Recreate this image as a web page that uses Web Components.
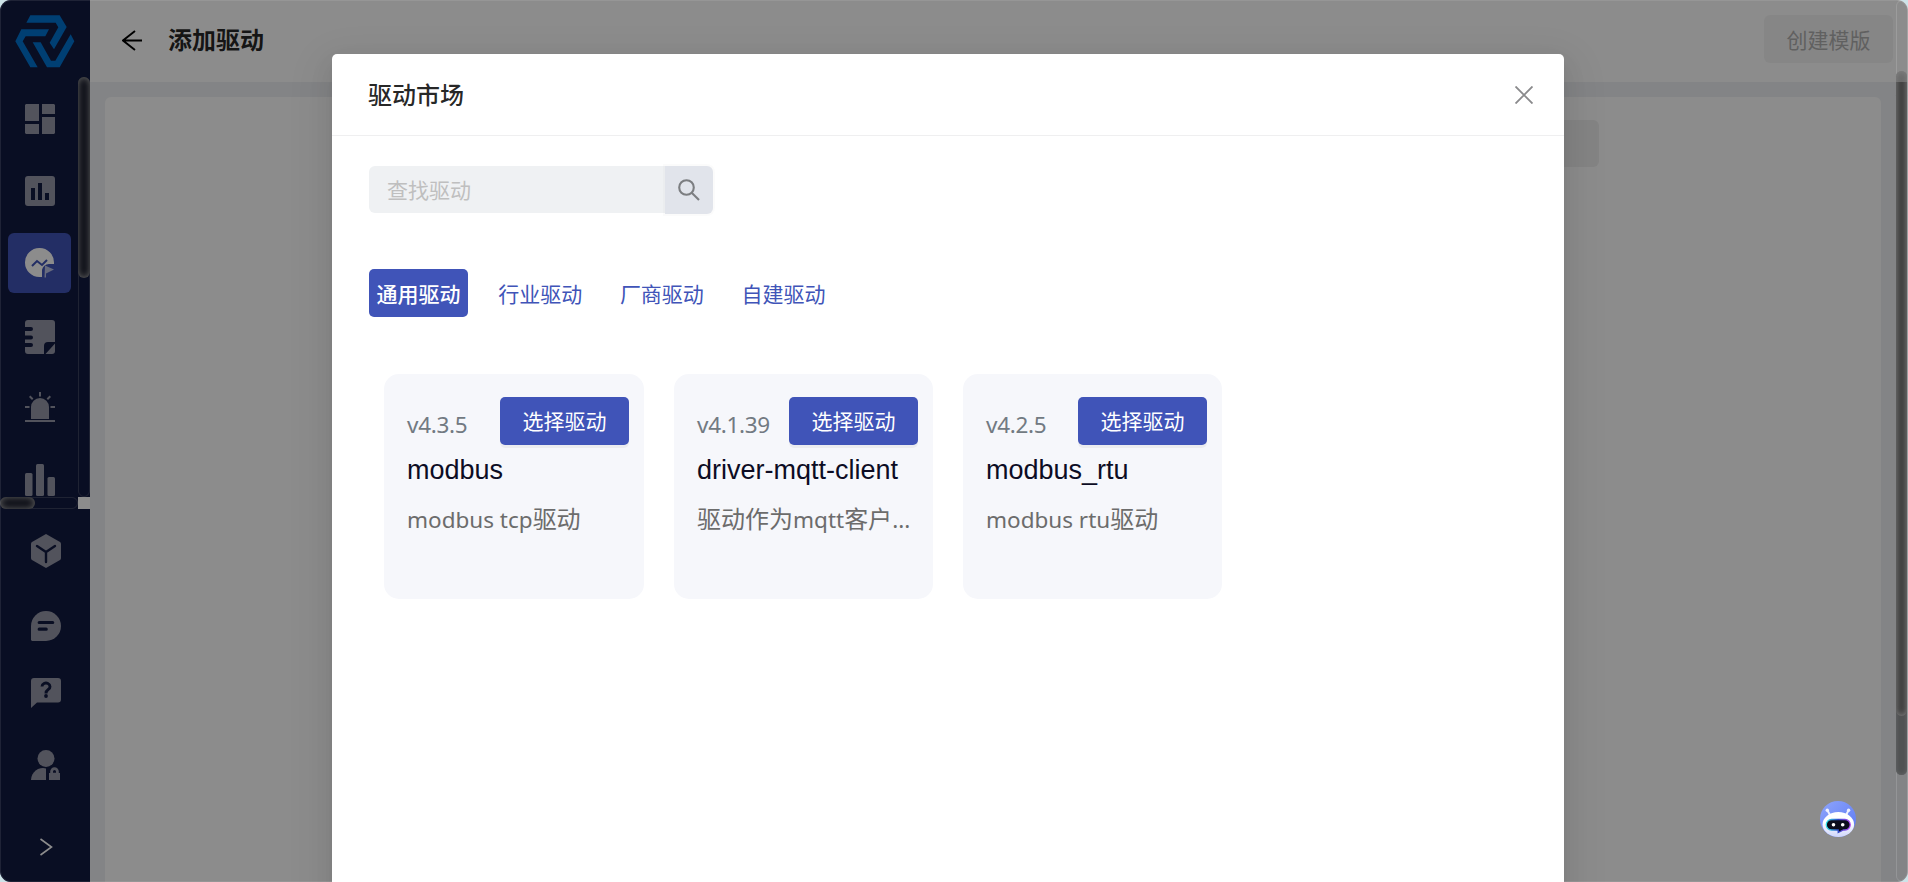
<!DOCTYPE html>
<html lang="zh-CN">
<head>
<meta charset="UTF-8">
<title>添加驱动</title>
<style>
    html, body {
        margin: 0;
        height: 100%;
        overflow: hidden;
        background: #cde3e8;
        font-family: "Noto Sans", "Noto Sans CJK SC", sans-serif;
    }
</style>
</head>
<body>
<app-window>
    <side-bar slot="side"></side-bar>
    <page-header slot="page" heading="添加驱动" action="创建模版"></page-header>
    <page-panel slot="page"></page-panel>
    <market-modal slot="modal" heading="驱动市场">
        <search-box placeholder="查找驱动"></search-box>
        <driver-tabs items="通用驱动,行业驱动,厂商驱动,自建驱动"></driver-tabs>
        <card-grid>
            <driver-card version="v4.3.5" name="modbus" desc="modbus tcp驱动"></driver-card>
            <driver-card version="v4.1.39" name="driver-mqtt-client" desc="驱动作为mqtt客户..."></driver-card>
            <driver-card version="v4.2.5" name="modbus_rtu" desc="modbus rtu驱动"></driver-card>
        </card-grid>
    </market-modal>
    <chat-robot slot="float"></chat-robot>
</app-window>

<script>
class AppWindow extends HTMLElement {
    connectedCallback() {
        this.attachShadow({ mode: 'open' });
        this.shadowRoot.innerHTML = `
            <style>
                :host {
                    display: flex;
                    position: relative;
                    width: 100%;
                    height: 100vh;
                    border-radius: 11px;
                    overflow: hidden;
                    background: #eff1f4;
                }

                .page {
                    flex: 1;
                    display: flex;
                    flex-direction: column;
                    min-width: 0;
                }

                .mask {
                    position: absolute;
                    inset: 0;
                    background: rgba(0, 0, 0, 0.45);
                }

                .wrap {
                    position: absolute;
                    inset: 0;
                    display: flex;
                    padding: 54px 0 0 332px;
                }

                /* page scrollbar under the modal's own one */
                .track {
                    position: absolute;
                    top: 0;
                    right: 0;
                    width: 12px;
                    height: 100%;
                    border: 1px solid rgba(255, 255, 255, 0.14);
                    border-radius: 11px;
                    box-sizing: border-box;
                }

                .under, .thumb {
                    position: absolute;
                    right: 1px;
                    width: 11px;
                    border-radius: 6px;
                }

                .under {
                    top: 90px;
                    height: 685px;
                    background: #505253;
                    box-shadow: inset 0 0 4px #68696b;
                }

                .thumb {
                    top: 71px;
                    height: 645px;
                    background: linear-gradient(#6a6a6a 11px, #3e3e3e 11px);
                    box-shadow: inset 0 0 6px #858585;
                }

                .edge {
                    position: absolute;
                    inset: 0;
                    border: 1px solid rgba(255, 255, 255, 0.09);
                    border-radius: 11px;
                }
            </style>
            <slot name="side"></slot>
            <div class="page"><slot name="page"></slot></div>
            <div class="mask"></div>
            <div class="wrap"><slot name="modal"></slot></div>
            <div class="track"></div>
            <div class="under"></div>
            <div class="thumb"></div>
            <slot name="float"></slot>
            <div class="edge"></div>
        `;
    }
}

class SideBar extends HTMLElement {
    connectedCallback() {
        const menu = [
            '<svg width="30" height="30" viewBox="0 0 30 30"><path d="M1 0h13v17H0V1zM0 20h14v10H1l-1-1zM17 0h12l1 1v9H17zM17 13h13v16l-1 1H17z"/></svg>',
            '<svg width="30" height="30" viewBox="0 0 30 30"><path fill-rule="evenodd" d="M3 0h24a3 3 0 0 1 3 3v24a3 3 0 0 1-3 3H3a3 3 0 0 1-3-3V3a3 3 0 0 1 3-3zM6 12v12h4V12zM13 7v17h4V7zM20 17v7h4v-7z"/></svg>',
            '<svg width="30" height="30" viewBox="0 0 30 30"><path d="M14.500 0A14.400 14.400 0 0 0 0 14.500A14.400 14.400 0 0 0 14.500 29H17V22A7 7 0 0 1 24 16H29V14.500A14.400 14.400 0 0 0 14.500 0z"/><path d="M7 18l5-5 5 4 5-5" fill="none" stroke="#4054b8" stroke-width="2"/><path d="M20 17.500l9 4-8 4v4h-1.500z" opacity=".65"/></svg>',
            '<svg style="margin-top:4px" width="30" height="34" viewBox="0 0 30 34"><path d="M3 0h24a3 3 0 0 1 3 3v19h-7a4 4 0 0 0-4 4v8H3a3 3 0 0 1-3-3v-4h6a1.500 1.500 0 0 0 0-4H0v-3.500h6a1.500 1.500 0 0 0 0-4H0V11h6a1.500 1.500 0 0 0 0-4H0V3a3 3 0 0 1 3-3zM30 23.500V31a3 3 0 0 1-3 3h-6.500z"/></svg>',
            '<svg width="30" height="30" viewBox="0 0 30 30"><path d="M6 27V15a9 9 0 0 1 18 0v12zM0 28h30v2H0zM14 0h2v4.500h-2zM0 14h4.500v2H0zM25.500 14H30v2h-4.500zM4 5l1.400-1.400 3 3L7 8zM26 5l-1.400-1.400-3 3L23 8z"/></svg>',
            '<svg style="margin-top:2px" width="30" height="32" viewBox="0 0 30 32"><rect y="9" width="7.500" height="23" rx="1.500"/><rect x="11" width="8" height="32" rx="1.500"/><rect x="22.500" y="13" width="7.500" height="19" rx="1.500"/></svg>'
        ];
        this.attachShadow({ mode: 'open' });
        this.shadowRoot.innerHTML = `
            <style>
                :host {
                    display: flex;
                    flex-direction: column;
                    width: 90px;
                    height: 100%;
                    background: #121a40;
                    color: #9698a8;
                }

                svg {
                    display: block;
                    fill: currentColor;
                }

                .logo {
                    height: 53px;
                    padding: 15px 0 9px 15px;
                    color: #0073d2;
                }

                .scroller {
                    display: grid;
                    grid-template-columns: 78px 12px;
                    grid-template-rows: 420px 12px;
                    height: 432px;
                }

                .menu {
                    display: flex;
                    flex-direction: column;
                    gap: 12px;
                    padding: 12px 0 0 8px;
                    overflow: hidden;
                }

                .item {
                    flex: none;
                    width: 63px;
                    height: 60px;
                    display: flex;
                    align-items: center;
                    justify-content: center;
                    border-radius: 6px;
                }

                .item.active {
                    background: #4054b8;
                    color: #fff;
                }

                .bar {
                    border: 1px solid #3a405e;
                    border-radius: 7px;
                }

                .bar div {
                    margin: -1px;
                    border-radius: 7px;
                    background: #1a1d2c;
                    box-shadow: inset 0 0 7px #b5b5b5;
                }

                .bar.v div { height: 201px; }
                .bar.h div { height: 12px; width: 35px; }
                .corner { background: #fff; }

                .foot {
                    display: flex;
                    flex-direction: column;
                    align-items: flex-start;
                    padding: 25px 0 0 31px;
                }
            </style>
            <div class="logo">
                <svg width="60" height="53" viewBox="46 44 180 159">
                    <path d="M92 45H180L201 80 163 147 150 127 176 81 168 67H80zM65 87H148L137 108H78L69 123 114 201H92L47 123zM99 126H123L154 181H167L213 102 224 123 180 201H142z"/>
                </svg>
            </div>
            <div class="scroller">
                <div class="menu">
                    ${menu.map((icon, i) => `<div class="item ${i === 2 ? 'active' : ''}">${icon}</div>`).join('')}
                </div>
                <div class="bar v"><div></div></div>
                <div class="bar h"><div></div></div>
                <div class="corner"></div>
            </div>
            <div class="foot">
                <svg width="30" height="34" viewBox="0 0 30 34"><path d="M15 0l14 8q1 .5 1 2v14q0 1.500-1 2l-14 8-14-8q-1-.5-1-2V10q0-1.500 1-2z"/><path d="M6 12l9 6 9-6M15 18v10" fill="none" stroke="#121a40" stroke-width="2.400" stroke-linecap="round"/></svg>
                <svg style="margin-top:43px" width="30" height="30" viewBox="0 0 30 30"><path d="M15 0a15 15 0 1 1 0 30H1l-1-1V15A15 15 0 0 1 15 0z"/><path d="M8.200 11.500h13.500M8.200 18.200h7" stroke="#121a40" stroke-width="3.200" stroke-linecap="round"/></svg>
                <svg style="margin-top:37px" width="30" height="30" viewBox="0 0 30 30"><path d="M3 0h24a3 3 0 0 1 3 3v18.500a3 3 0 0 1-3 3H6L0 30V3a3 3 0 0 1 3-3z"/><path d="M11 8.500a4 3.500 0 1 1 6.200 3q-2.200 1.500-2.200 4" fill="none" stroke="#121a40" stroke-width="2.900"/><circle cx="15" cy="18" r="1.900" fill="#121a40"/></svg>
                <svg style="margin-top:42px" width="30" height="30" viewBox="0 0 30 30"><circle cx="15" cy="8.500" r="8.500"/><path d="M0 30A12 12 0 0 1 15 18.500V30z"/><path fill-rule="evenodd" d="M18 23h1.200v-1.500a4.300 4.300 0 0 1 8.600 0V23H29v7H18zM22 22.700h3v-1.200a1.500 1.500 0 0 0-3 0z"/></svg>
                <svg style="margin:58px 0 0 9px" width="13" height="18" viewBox="0 0 13 18"><path d="M.5 1L11.500 9 .5 17" fill="none" stroke="#fff" stroke-width="1.600"/></svg>
            </div>
        `;
    }
}

class PageHeader extends HTMLElement {
    connectedCallback() {
        this.attachShadow({ mode: 'open' });
        this.shadowRoot.innerHTML = `
            <style>
                :host {
                    display: flex;
                    align-items: center;
                    box-sizing: border-box;
                    height: 82px;
                    padding: 0 15px 4px 32px;
                    background: #fff;
                }

                svg { margin-top: 2px; }

                h1 {
                    flex: 1;
                    margin: 2px 0 0 25px;
                    font-size: 24px;
                    line-height: 36px;
                    font-weight: 600;
                    color: rgba(0, 0, 0, 0.85);
                }

                button {
                    width: 129px;
                    height: 48px;
                    padding: 0;
                    border: 0;
                    border-radius: 6px;
                    background: #f5f5f5;
                    color: #b0b0b0;
                    font: 21px "Noto Sans CJK SC", sans-serif;
                }
            </style>
            <svg width="21" height="21" viewBox="0 0 21 21" fill="none" stroke="#000" stroke-width="1.900"><path d="M20 10.500H1M13 1L1 10.500 13 20"/></svg>
            <h1>${this.getAttribute('heading')}</h1>
            <button disabled>${this.getAttribute('action')}</button>
        `;
    }
}

class PagePanel extends HTMLElement {
    connectedCallback() {
        this.attachShadow({ mode: 'open' });
        this.shadowRoot.innerHTML = `
            <style>
                :host {
                    flex: 1;
                    display: flex;
                    justify-content: flex-end;
                    margin: 15px 27px 0 15px;
                    padding: 23px 282px 0 0;
                    border-radius: 6px 6px 0 0;
                    background: #fff;
                }

                .action {
                    width: 130px;
                    height: 47px;
                    border-radius: 6px;
                    background: #f0f0f0;
                }
            </style>
            <div class="action"></div>
        `;
    }
}

class MarketModal extends HTMLElement {
    connectedCallback() {
        this.attachShadow({ mode: 'open' });
        this.shadowRoot.innerHTML = `
            <style>
                :host {
                    display: block;
                    width: 1232px;
                    height: 900px;
                    border-radius: 5px;
                    background: #fff;
                    box-shadow: 0 4px 9px -6px rgba(0, 0, 0, 0.12),
                        0 9px 24px rgba(0, 0, 0, 0.08),
                        0 13px 42px 12px rgba(0, 0, 0, 0.05);
                }

                header {
                    display: flex;
                    align-items: center;
                    justify-content: space-between;
                    height: 81px;
                    padding: 0 31px 0 36px;
                    border-bottom: 1px solid #efeff0;
                }

                h2 {
                    margin: 0;
                    font-size: 24px;
                    line-height: 33px;
                    font-weight: 500;
                    color: rgba(0, 0, 0, 0.85);
                }

                main {
                    padding: 30px 37px;
                }
            </style>
            <header>
                <h2>${this.getAttribute('heading')}</h2>
                <svg width="18" height="18" viewBox="0 0 18 18" stroke="#8a8a8c" stroke-width="1.900"><path d="M.5.5l17 17M17.500.5l-17 17"/></svg>
            </header>
            <main><slot></slot></main>
        `;
    }
}

class SearchBox extends HTMLElement {
    connectedCallback() {
        this.attachShadow({ mode: 'open' });
        this.shadowRoot.innerHTML = `
            <style>
                :host {
                    display: flex;
                    height: 48px;
                }

                .field {
                    width: 278px;
                    height: 47px;
                    padding-left: 18px;
                    border-radius: 6px 0 0 6px;
                    background: #eff1f3;
                    color: #bfbfbf;
                    font: 21px/46px "Noto Sans CJK SC", sans-serif;
                }

                .go {
                    display: flex;
                    width: 48px;
                    height: 48px;
                    align-items: center;
                    justify-content: center;
                    border-radius: 0 6px 6px 0;
                    background: #e1e4eb;
                    box-shadow: 0 0 0 2px rgba(0, 0, 0, 0.015);
                }
            </style>
            <div class="field">${this.getAttribute('placeholder')}</div>
            <div class="go">
                <svg width="22" height="22" viewBox="0 0 22 22" fill="none" stroke="#7c7e81" stroke-width="2.100"><circle cx="8.500" cy="8.500" r="7.300"/><path d="M13.700 13.700l7.300 7.300"/></svg>
            </div>
        `;
    }
}

class DriverTabs extends HTMLElement {
    connectedCallback() {
        const items = this.getAttribute('items').split(',');
        this.attachShadow({ mode: 'open' });
        this.shadowRoot.innerHTML = `
            <style>
                :host {
                    display: flex;
                    gap: 22.7px;
                    margin-top: 55px;
                }

                .tab {
                    width: 99px;
                    height: 48px;
                    border-radius: 5px;
                    color: #4054b8;
                    text-align: center;
                    font: 21px/48px "Noto Sans CJK SC", sans-serif;
                }

                .tab.on {
                    background: #4054b8;
                    color: #fff;
                    font-weight: 500;
                }
            </style>
            ${items.map((t, i) => `<div class="tab ${i ? '' : 'on'}">${t}</div>`).join('')}
        `;
    }
}

class CardGrid extends HTMLElement {
    connectedCallback() {
        this.attachShadow({ mode: 'open' });
        this.shadowRoot.innerHTML = `
            <style>
                :host {
                    display: grid;
                    grid-template-columns: 260px 259px 259px;
                    gap: 30px;
                    margin: 57px 0 0 15px;
                }
            </style>
            <slot></slot>
        `;
    }
}

class DriverCard extends HTMLElement {
    connectedCallback() {
        // latin runs sit a little smaller than the chinese around them
        const desc = this.getAttribute('desc').replace(/[a-z][a-z ]*|\.+/g, '<span>$&</span>');
        this.attachShadow({ mode: 'open' });
        this.shadowRoot.innerHTML = `
            <style>
                :host {
                    display: block;
                    box-sizing: border-box;
                    height: 225px;
                    padding: 23px 15px 0 23px;
                    border-radius: 15px;
                    background: #f6f7fb;
                }

                .top {
                    display: flex;
                    justify-content: space-between;
                    height: 48px;
                }

                .version {
                    font-size: 22.5px;
                    line-height: 55px;
                    letter-spacing: -0.3px;
                    color: #727a82;
                }

                button {
                    width: 129px;
                    height: 48px;
                    padding: 0 0 2px;
                    border: 0;
                    border-radius: 5px;
                    background: #4054b8;
                    box-shadow: 0 3px 0 rgba(0, 0, 0, 0.045);
                    color: #fff;
                    font: 21px "Noto Sans CJK SC", sans-serif;
                }

                .name {
                    margin-top: 7px;
                    font: 27px/36px "Liberation Sans", Arial, sans-serif;
                    color: #0c0c24;
                    white-space: nowrap;
                }

                .desc {
                    margin-top: 12px;
                    font: 24px/36px "Noto Sans CJK SC", sans-serif;
                    color: #6c6c6c;
                    white-space: nowrap;
                }

                .desc span {
                    font-family: "Noto Sans", sans-serif;
                    font-size: 22.5px;
                }
            </style>
            <div class="top">
                <div class="version">${this.getAttribute('version')}</div>
                <button>选择驱动</button>
            </div>
            <div class="name">${this.getAttribute('name')}</div>
            <div class="desc">${desc}</div>
        `;
    }
}

class ChatRobot extends HTMLElement {
    connectedCallback() {
        this.attachShadow({ mode: 'open' });
        this.shadowRoot.innerHTML = `
            <style>
                :host {
                    display: block;
                    position: absolute;
                    right: 52px;
                    bottom: 45px;
                    width: 36px;
                    height: 36px;
                }
            </style>
            <svg width="36" height="36" viewBox="0 0 36 36">
                <defs>
                    <linearGradient id="sky" x1="0" x2="1" y2="1"><stop offset="0" stop-color="#8ea5fb"/><stop offset="1" stop-color="#5b78f4"/></linearGradient>
                    <linearGradient id="rim"><stop offset="0" stop-color="#35e4e8"/><stop offset=".5" stop-color="#3049c8"/><stop offset="1" stop-color="#b44df5"/></linearGradient>
                    <linearGradient id="head" x2="0" y2="1"><stop offset=".4" stop-color="#fff"/><stop offset="1" stop-color="#cfd6fb"/></linearGradient>
                </defs>
                <circle cx="18" cy="18" r="18" fill="url(#sky)"/>
                <path d="M10.500 15L7.500 9.500M25.500 15L28.500 9.500" stroke="#eef1ff" stroke-width="2"/>
                <circle cx="7.300" cy="9.300" r="1.700" fill="#eef1ff"/>
                <circle cx="28.600" cy="9.300" r="1.700" fill="#eef1ff"/>
                <ellipse cx="18.300" cy="23.500" rx="15.800" ry="12.500" fill="url(#head)"/>
                <path d="M11.500 18.500H25a5 5 0 0 1 0 10.500H23.500L18.200 31.500V29H11.500a5 5 0 0 1 0-10.500z" fill="#0b0d1c" stroke="url(#rim)" stroke-width="1.300"/>
                <circle cx="13.500" cy="23.700" r="1.800" fill="#fff"/>
                <circle cx="22.700" cy="23.700" r="1.800" fill="#fff"/>
            </svg>
        `;
    }
}

customElements.define('app-window', AppWindow);
customElements.define('side-bar', SideBar);
customElements.define('page-header', PageHeader);
customElements.define('page-panel', PagePanel);
customElements.define('market-modal', MarketModal);
customElements.define('search-box', SearchBox);
customElements.define('driver-tabs', DriverTabs);
customElements.define('card-grid', CardGrid);
customElements.define('driver-card', DriverCard);
customElements.define('chat-robot', ChatRobot);
</script>
</body>
</html>
